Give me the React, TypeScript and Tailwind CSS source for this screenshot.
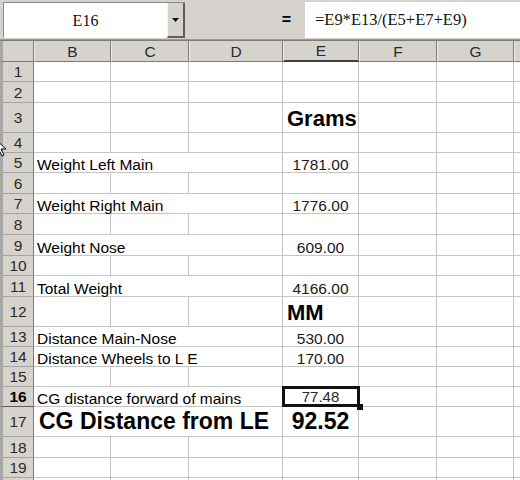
import React from 'react';

type Row = {
  n: number;
  h: 20 | 21 | 30;
  label?: string;
  big?: boolean;
  e?: string;
  kind?: 'num' | 'unit' | 'big' | 'sel';
};

const ROWS: Row[] = [
  { n: 1, h: 20 },
  { n: 2, h: 21 },
  { n: 3, h: 30, e: 'Grams', kind: 'unit' },
  { n: 4, h: 20 },
  { n: 5, h: 20, label: 'Weight Left Main', e: '1781.00' },
  { n: 6, h: 21 },
  { n: 7, h: 20, label: 'Weight Right Main', e: '1776.00' },
  { n: 8, h: 21 },
  { n: 9, h: 21, label: 'Weight Nose', e: '609.00' },
  { n: 10, h: 20 },
  { n: 11, h: 21, label: 'Total Weight', e: '4166.00' },
  { n: 12, h: 30, e: 'MM', kind: 'unit' },
  { n: 13, h: 20, label: 'Distance Main-Nose', e: '530.00' },
  { n: 14, h: 20, label: 'Distance Wheels to L E', e: '170.00' },
  { n: 15, h: 20 },
  { n: 16, h: 20, label: 'CG distance forward of mains', e: '77.48', kind: 'sel' },
  { n: 17, h: 30, label: 'CG Distance from LE', big: true, e: '92.52', kind: 'big' },
  { n: 18, h: 21 },
  { n: 19, h: 20 },
  { n: 0, h: 20 },
];

const HEIGHT = { 20: 'h-[20px]', 21: 'h-[21px]', 30: 'h-[30px]' };

const grid = 'shrink-0 border-r border-b border-[#c4c4c4]';

function ECell({ row }: { row: Row }) {
  if (!row.e) return <div className={`w-[76px] ${grid}`} />;
  if (row.kind === 'unit') {
    return (
      <div className={`w-[76px] ${grid} flex items-end pl-[4px] pb-[2px] whitespace-nowrap text-[22px] font-bold leading-none text-black`}>
        {row.e}
      </div>
    );
  }
  if (row.kind === 'big') {
    return (
      <div className={`w-[76px] ${grid} flex items-end justify-center pb-[3px] text-[23px] font-bold leading-none text-black`}>
        {row.e}
      </div>
    );
  }
  if (row.kind === 'sel') {
    return (
      <div className={`relative w-[76px] ${grid} flex items-end justify-center pb-[2px] text-[15px] leading-none text-[#2a2a2a]`}>
        {row.e}
        <div className="absolute -left-[1px] -top-[1px] -right-[2px] -bottom-[1px] border-[3px] border-[#111]" />
        <div className="absolute -right-[5px] -bottom-[4px] h-[6px] w-[6px] bg-[#111]" />
      </div>
    );
  }
  return (
    <div className={`w-[76px] ${grid} flex items-end justify-center text-[15.5px] leading-none text-[#1a1a1a]`}>
      {row.e}
    </div>
  );
}

function GridRow({ row }: { row: Row }) {
  const sel = row.kind === 'sel';
  return (
    <div className={`flex ${HEIGHT[row.h]}`}>
      <div
        className={`w-[34px] shrink-0 border-l-[3px] border-l-[#a9a7a3] border-r border-r-[#7c7c7c] border-b bg-[#d6d3ce] flex items-center justify-center pt-[1px] text-[15.5px] leading-none ${
          sel ? 'border-b-[#5a5a5a] font-bold text-black' : 'border-b-[#a6a4a0] text-[#2a2a2a]'
        }`}
      >
        {row.n > 0 ? row.n : ''}
      </div>
      {row.label ? (
        <div
          className={`w-[249px] ${grid} flex items-end whitespace-nowrap leading-none text-black ${
            row.big ? 'pl-[5px] pb-[3px] text-[23px] font-bold' : 'pl-[3px] text-[15.5px] text-[#1a1a1a]'
          }`}
        >
          {row.label}
        </div>
      ) : (
        <>
          <div className={`w-[77px] ${grid}`} />
          <div className={`w-[78px] ${grid}`} />
          <div className={`w-[94px] ${grid}`} />
        </>
      )}
      <ECell row={row} />
      <div className={`w-[78px] ${grid}`} />
      <div className={`w-[77px] ${grid}`} />
      <div className={`w-[20px] ${grid}`} />
    </div>
  );
}

function HeadCell({ w, label, active }: { w: string; label: string; active?: boolean }) {
  return (
    <div
      className={`${w} shrink-0 border-r border-r-[#7c7c7c] border-l border-l-[#ecebe8] flex items-center justify-center text-[15.5px] leading-none pt-[1px] text-[#2a2a2a] ${
        active ? 'border-b-2 border-b-[#404040]' : 'border-b border-b-[#7c7c7c]'
      }`}
    >
      {label}
    </div>
  );
}

export default function App() {
  return (
    <div className="relative h-[480px] w-[520px] overflow-hidden bg-white font-['Liberation_Sans',Arial,sans-serif]">
      {/* name box + formula bar */}
      <div className="flex h-[40px] bg-[#d6d3ce] border-b border-b-[#9c9a96]">
        <div className="ml-[3px] mt-[2px] flex h-[36px] w-[182px] bg-white border-t border-t-[#8a8a8a] border-l border-l-[#8a8a8a]">
          <div className="flex flex-1 items-center justify-center pt-[1px] font-['Liberation_Serif',serif] text-[16px] text-[#111]">
            E16
          </div>
          <div className="flex w-[18px] items-center justify-center bg-[#d6d3ce] border-l border-l-[#f4f3f0] border-r-2 border-r-[#5e5e5e] border-b-2 border-b-[#5e5e5e]">
            <svg width="7" height="4" viewBox="0 0 7 4">
              <path d="M0 0h7L3.5 4z" fill="#111" />
            </svg>
          </div>
        </div>
        <div className="flex w-[120px] items-center justify-end pr-[14px] text-[16px] font-bold text-black">=</div>
        <div className="mt-[2px] flex h-[36px] flex-1 items-center bg-white pl-[10px] pt-[1px] font-['Liberation_Serif',serif] text-[16.5px] text-[#111]">
          =E9*E13/(E5+E7+E9)
        </div>
      </div>

      {/* column headers */}
      <div className="flex h-[22px] bg-[#d6d3ce] border-t border-t-[#7c7c7c]">
        <div className="w-[34px] shrink-0 border-l-[3px] border-l-[#a9a7a3] border-r border-r-[#7c7c7c] border-b border-b-[#7c7c7c]" />
        <HeadCell w="w-[77px]" label="B" />
        <HeadCell w="w-[78px]" label="C" />
        <HeadCell w="w-[94px]" label="D" />
        <HeadCell w="w-[76px]" label="E" active />
        <HeadCell w="w-[78px]" label="F" />
        <HeadCell w="w-[77px]" label="G" />
        <HeadCell w="w-[20px]" label="" />
      </div>

      {ROWS.map((r, i) => (
        <GridRow key={i} row={r} />
      ))}

      {/* mouse pointer at the left edge */}
      <svg className="absolute left-[-6px] top-[138px]" width="14" height="20" viewBox="0 0 14 20">
        <path d="M1 1v15l4-4 3 6 2-1-3-6h5z" fill="#fff" stroke="#000" strokeWidth="1" />
      </svg>
    </div>
  );
}
